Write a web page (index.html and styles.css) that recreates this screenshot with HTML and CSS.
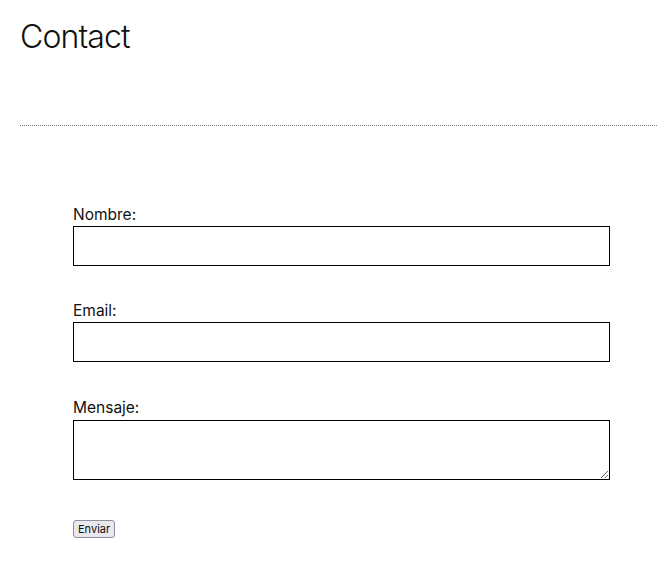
FILE: index.html
```html
<!DOCTYPE html>
<html lang="es">
  <head>
    <meta charset="UTF-8" />
    <title>Contact</title>
    <link rel="stylesheet" href="styles.css">
  </head>
  <body>
    <header class="page-header">
      <h1>Contact</h1>
    </header>
    <form class="contact-form">
      <div class="field">
        <label for="nombre">Nombre:</label>
        <input type="text" id="nombre" class="input" />
      </div>
      <div class="field">
        <label for="email">Email:</label>
        <input type="email" id="email" class="input" />
      </div>
      <div class="field field-message">
        <label for="mensaje">Mensaje:</label>
        <textarea id="mensaje" class="input textarea"></textarea>
      </div>
      <button type="submit" class="submit">Enviar</button>
    </form>
  </body>
</html>
```

FILE: styles.css
```css
body {
  font-family: Inter, "Noto Sans", sans-serif;
  color: #111;
  background: #fff;
  margin: 0;
  padding: 0;
}
.page-header {
  margin-left: 20px;
  padding-top: 17px;
  height: 126px;
  border-bottom: 1px dotted #777;
  box-sizing: border-box;
}
.page-header h1 {
  margin: 0;
  font-size: 32px;
  font-weight: 300;
  letter-spacing: -0.9px;
}
.contact-form {
  padding: 79px 47px 0 73px;
}
.field {
  display: flex;
  flex-direction: column;
  margin-bottom: 35px;
}
.field label {
  font-size: 15.5px;
  line-height: 19px;
  margin-bottom: 2px;
}
.field-message {
  margin-bottom: 36px;
}
.field-message label {
  padding-top: 1px;
  margin-bottom: 3px;
}
.input {
  height: 40px;
  box-sizing: border-box;
  border: 1px solid #000;
  border-radius: 0;
  margin: 0;
  font-family: inherit;
}
.textarea {
  height: 60px;
  resize: vertical;
}
.submit {
  margin-top: 4px;
  font-family: inherit;
  font-size: 11px;
  color: #111;
  background: #e9e9ed;
  border: 1px solid #8f8f9d;
  border-radius: 3px;
  padding: 1px 4px;
}
```
